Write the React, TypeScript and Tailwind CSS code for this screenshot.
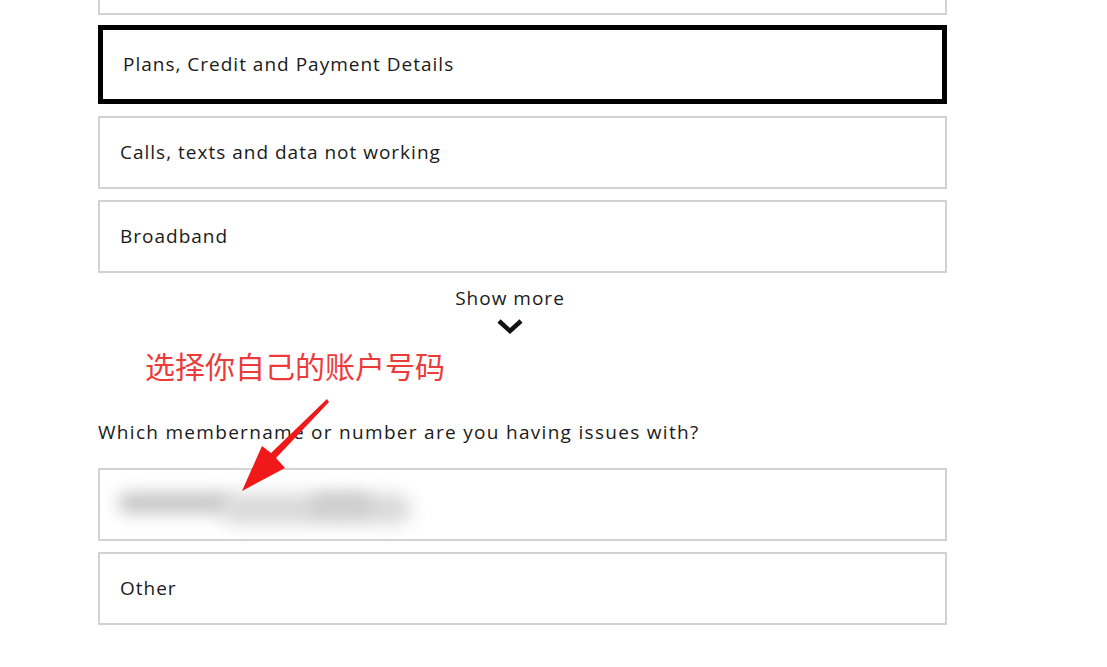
const font = { fontFamily: '"Open Sans", "Liberation Sans", sans-serif' };

function Option({ label, selected }: { label?: string; selected?: boolean }) {
    return (
        <div
            className={
                selected
                    ? 'w-[849px] h-[79px] border-[5px] border-black flex items-center pl-[20px] text-[19px] tracking-[1px] text-[#1a1a1a]'
                    : 'w-[849px] h-[73px] border-2 border-[#d2d2d2] flex items-center pl-[20px] text-[19px] tracking-[1px] text-[#1a1a1a]'
            }
        >
            {label}
        </div>
    );
}

export default function App() {
    return (
        <div className="relative w-[1107px] h-[667px] bg-white overflow-hidden" style={font}>
            <div className="pl-[98px] flex flex-col">
                <div className="mt-[-58px]">
                    <Option />
                </div>
                <div className="mt-[10px]">
                    <Option label="Plans, Credit and Payment Details" selected />
                </div>
                <div className="mt-[12px]">
                    <Option label="Calls, texts and data not working" />
                </div>
                <div className="mt-[11px]">
                    <Option label="Broadband" />
                </div>

                <div className="w-[824px] flex flex-col items-center mt-[12px]">
                    <span className="text-[19px] tracking-[1px] leading-[26px] text-[#1a1a1a]">Show more</span>
                    <svg width="28" height="20" viewBox="0 0 28 20" className="mt-[6px]">
                        <path d="M3 4 L14 14 L25 4" fill="none" stroke="#111" strokeWidth="4.5" />
                    </svg>
                </div>

                <div
                    className="ml-[47px] mt-[8px] text-[30px] leading-[40px] text-[#ec3b3b]"
                    style={{ fontFamily: '"Noto Sans CJK SC", sans-serif' }}
                >
                    选择你自己的账户号码
                </div>

                <div className="mt-[34px] text-[19px] tracking-[1.3px] leading-[26px] text-[#1a1a1a]">
                    Which membername or number are you having issues with?
                </div>

                <div className="mt-[23px] relative">
                    <Option />
                    <div className="absolute left-[18px] top-[12px] w-[295px] h-[54px]">
                        <div className="absolute left-[2px] top-[12px] w-[115px] h-[22px] rounded-full bg-[#c8c8c8] blur-[8px]" />
                        <div className="absolute left-[105px] top-[14px] w-[190px] h-[30px] rounded-full bg-[#d8d8d8] blur-[9px]" />
                        <div className="absolute left-[195px] top-[14px] w-[60px] h-[20px] rounded-full bg-[#cccccc] blur-[8px]" />
                    </div>
                </div>
                <div className="mt-[11px]">
                    <Option label="Other" />
                </div>
            </div>

            <svg className="absolute left-0 top-0" width="1107" height="667" viewBox="0 0 1107 667">
                <path
                    d="M327 399 L329 402 L276 458 L285 468 L242 491 L262 446 L271 453 Z"
                    fill="#f01818"
                />
            </svg>
        </div>
    );
}
